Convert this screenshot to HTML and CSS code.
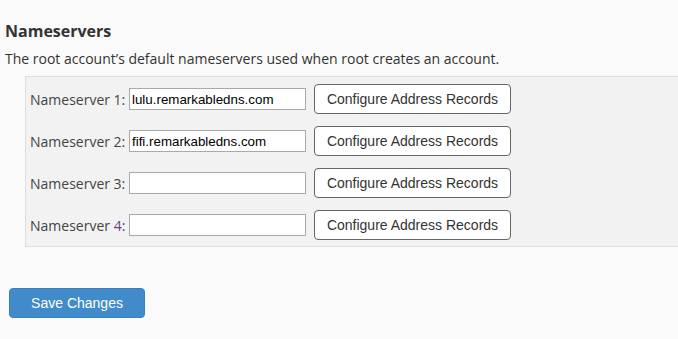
FILE: index.html
```html
<!DOCTYPE html>
<html>
<head>
<meta charset="utf-8">
<link rel="stylesheet" href="styles.css">
</head>
<body>
<div class="page">
  <h2 class="title">Nameservers</h2>
  <p class="desc">The root account’s default nameservers used when root creates an account.</p>
  <div class="panel">
    <div class="row">
      <label class="label">Nameserver 1:</label>
      <input class="field" type="text" value="lulu.remarkabledns.com">
      <button class="btn">Configure Address Records</button>
    </div>
    <div class="row">
      <label class="label">Nameserver 2:</label>
      <input class="field" type="text" value="fifi.remarkabledns.com">
      <button class="btn">Configure Address Records</button>
    </div>
    <div class="row">
      <label class="label">Nameserver 3:</label>
      <input class="field" type="text" value="">
      <button class="btn">Configure Address Records</button>
    </div>
    <div class="row">
      <label class="label">Nameserver <span class="num">4</span>:</label>
      <input class="field" type="text" value="">
      <button class="btn">Configure Address Records</button>
    </div>
  </div>
  <div class="actions">
    <button class="save">Save Changes</button>
  </div>
</div>
</body>
</html>
```
FILE: styles.css
```css
html, body {
  margin: 0;
  padding: 0;
  background: #fafafa;
  overflow: hidden;
}
.page {
  padding: 20px 0 0 5px;
  font-family: "Open Sans", sans-serif;
  color: #333;
}
.title {
  margin: 0;
  font-size: 16px;
  font-weight: 700;
  line-height: 22px;
  color: #333;
}
.desc {
  margin: 7px 0 0 0;
  font-size: 14px;
  line-height: 20px;
  color: #333;
}
.panel {
  margin: 7px -20px 0 20px;
  background: #f2f2f2;
  border: 1px solid #dddde5;
  border-right: none;
  padding: 7px 0 6px 4px;
  display: flex;
  flex-direction: column;
  gap: 12px;
}
.row {
  display: flex;
  align-items: center;
  height: 30px;
}
.label {
  font-size: 14px;
  color: #444;
  width: 99px;
}
.num {
  color: #6b3a87;
}
.field {
  box-sizing: border-box;
  width: 177px;
  height: 22px;
  margin: 0;
  border: 1px solid #a9a9a9;
  background: #fff;
  padding: 0 2px;
  font-family: "Liberation Sans", Arial, sans-serif;
  font-size: 13.33px;
  color: #000;
  outline: none;
}
.btn {
  box-sizing: border-box;
  margin-left: 8px;
  width: 197px;
  height: 30px;
  background: #fff;
  border: 1px solid #666;
  border-radius: 4px;
  font-family: "Liberation Sans", Arial, sans-serif;
  font-size: 14px;
  color: #333;
  padding: 0;
}
.actions {
  margin-top: 41px;
  margin-left: 4px;
}
.save {
  box-sizing: border-box;
  width: 136px;
  height: 30px;
  background: #428bca;
  border: 1px solid #3a7fbd;
  border-radius: 4px;
  color: #fff;
  font-family: "Liberation Sans", Arial, sans-serif;
  font-size: 14px;
  padding: 0;
}
```
